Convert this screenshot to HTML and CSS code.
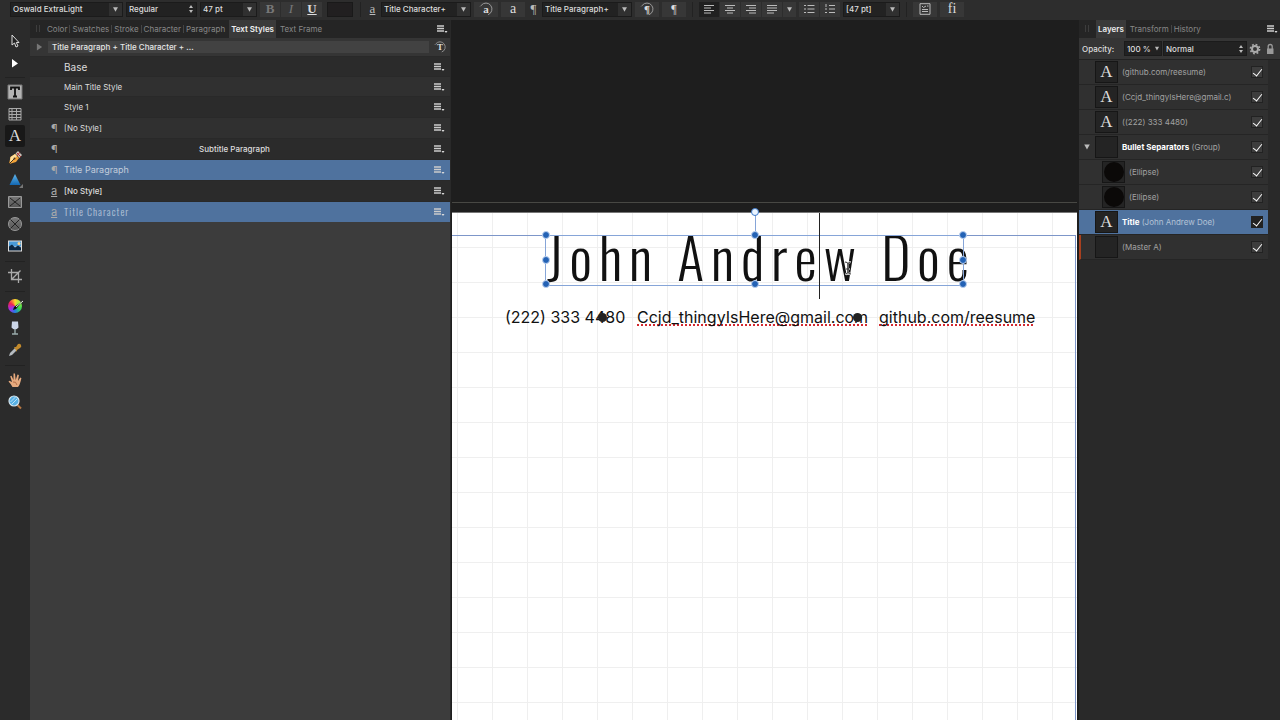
FILE: index.html
```html
<!DOCTYPE html>
<html lang="en">
<head>
<meta charset="utf-8">
<title>Resume layout</title>
<link rel="stylesheet" href="styles.css">
</head>
<body>
<svg class="defs" aria-hidden="true">
  <defs>
    <symbol id="menu" viewBox="0 0 12 10"><path d="M1 2h7M1 4.500h7M1 7h7" stroke="#ccc" stroke-width="1.600"/><path d="M8.500 7h3l-1.500 2z" fill="#ddd"/></symbol>
    <symbol id="arrow" viewBox="0 0 8 8"><path d="M1.200 1.500h5.600L4 6.500z" fill="#bbb"/></symbol>
    <symbol id="updown" viewBox="0 0 8 10"><path d="M2 4l2-3 2 3zM2 6l2 3 2-3z" fill="#bbb"/></symbol>
    <symbol id="ring" viewBox="0 0 16 14"><path d="M3.200 3.400A6 6 0 1 1 10 12.700M2.200 4.400l1-1" fill="none" stroke="#999" stroke-width="1"/></symbol>
    <linearGradient id="metal" x2="0" y2="1"><stop stop-color="#777"/><stop offset="1" stop-color="#555"/></linearGradient>
    <linearGradient id="blue" x2="0" y2="1"><stop stop-color="#62b8ee"/><stop offset="1" stop-color="#1267b2"/></linearGradient>
  </defs>
</svg>
<div class="app">
  <header class="toolbar">
    <div class="combo w-font"><select aria-label="Font family"><option>Oswald ExtraLight</option></select><svg class="arrow boxed"><use href="#arrow"/></svg></div>
    <div class="combo w-weight"><select aria-label="Font style"><option>Regular</option></select><svg class="updown"><use href="#updown"/></svg></div>
    <div class="combo w-size"><select aria-label="Font size"><option>47 pt</option></select><svg class="arrow boxed"><use href="#arrow"/></svg></div>
    <div class="group biu"><button class="serif dim bold">B</button><button class="serif dim italic">I</button><button class="serif under bold">U</button></div>
    <button class="swatch" aria-label="Text colour"></button>
    <span class="divider"></span>
    <span class="lead serif under">a</span>
    <div class="combo w-style"><select aria-label="Character style"><option>Title Character+</option></select><svg class="arrow boxed"><use href="#arrow"/></svg></div>
    <button class="square ringed serif"><svg><use href="#ring"/></svg>a</button>
    <button class="square serif big">a</button>
    <span class="lead serif">¶</span>
    <div class="combo w-style"><select aria-label="Paragraph style"><option>Title Paragraph+</option></select><svg class="arrow boxed"><use href="#arrow"/></svg></div>
    <button class="square ringed serif"><svg><use href="#ring"/></svg>¶</button>
    <button class="square serif">¶</button>
    <span class="divider"></span>
    <div class="group">
      <button class="on" aria-label="Align left"><svg viewBox="0 0 12 10"><path d="M1 1.500h10M1 4h7M1 6.500h10M1 9h7"/></svg></button>
      <button aria-label="Align centre"><svg viewBox="0 0 12 10"><path d="M1 1.500h10M3 4h6M1 6.500h10M3 9h6"/></svg></button>
      <button aria-label="Align right"><svg viewBox="0 0 12 10"><path d="M1 1.500h10M4 4h7M1 6.500h10M4 9h7"/></svg></button>
      <button aria-label="Justify"><svg viewBox="0 0 12 10"><path d="M1 1.500h10M1 4h10M1 6.500h10M1 9h7"/></svg></button>
      <button class="thin" aria-label="More alignment"><svg class="arrow"><use href="#arrow"/></svg></button>
    </div>
    <div class="group">
      <button aria-label="Bullets"><svg viewBox="0 0 12 10"><path d="M1 1.500h2M4.500 1.500h7M1 5h2M4.500 5h7M1 8.500h2M4.500 8.500h7"/></svg></button>
      <button aria-label="Numbering"><svg viewBox="0 0 12 10"><path d="M2 0v3M5 1.500h6M1 5h2M5 5h6M1 8.500h2M5 8.500h6"/></svg></button>
    </div>
    <div class="combo w-lead"><select aria-label="Leading"><option>[47 pt]</option></select><svg class="arrow boxed"><use href="#arrow"/></svg></div>
    <span class="divider"></span>
    <button class="square" aria-label="Text frame"><svg viewBox="0 0 12 12"><path d="M1 .7h10v10.600H1zM3 3l1.500 1.500L7 3M8 3h1.500M3 6.500h6M3 8.500h6" fill="none"/></svg></button>
    <button class="square serif big">fi</button>
  </header>

  <nav class="tools" aria-label="Tools">
    <button aria-label="Move"><svg viewBox="0 0 16 16"><path d="M5 2v10l2.500-2 1.500 4 2-1-1.700-3.500H12z" fill="#222" stroke="#ddd"/></svg></button>
    <button aria-label="Node"><svg viewBox="0 0 16 16"><path d="M5 4v8.500l6-4z" fill="#fff"/></svg></button>
    <hr>
    <button aria-label="Frame text"><svg viewBox="0 0 16 16"><path d="M1 1h14v14H1z" fill="#b4b4b4" stroke="#777"/><path d="M4 6V3.500h8V6M8 3.500v9M6 12.500h4" fill="none" stroke="#111" stroke-width="1.800"/></svg></button>
    <button aria-label="Table"><svg viewBox="0 0 16 16"><path d="M2 2.500h12v11.500H2zM2 5.500h12M2 8.500h12M2 11.500h12M5 2v12M9.500 2v12" fill="#333" stroke="#aaa"/></svg></button>
    <button class="active" aria-label="Artistic text"><span class="serif">A</span></button>
    <button aria-label="Pen"><svg viewBox="0 0 16 16"><path d="M2 14l1.500-7L8 4l4 4-3 4z" fill="#f1a33a"/><path d="M3.500 7L8 4l2 2-7 7z" fill="#ffe09a"/><path d="M2 14l5-5" stroke="#432"/><circle cx="7.500" cy="8.500" r="1" fill="#432"/><path d="M8.500 3.500L11 1l4 4-2.500 3z" fill="#c8c0b8"/><path d="M10 3l4 4M13 2l-3 4" stroke="#a33"/></svg></button>
    <button aria-label="Triangle"><svg viewBox="0 0 16 16"><path d="M8 2l5.500 11h-11z" fill="url(#blue)"/><path d="M16 12v4h-4z" fill="#777"/></svg></button>
    <button aria-label="Picture rectangle"><svg viewBox="0 0 16 16"><path d="M1.500 2.500h13v11h-13z" fill="url(#metal)" stroke="#999"/><path d="M3 4l10 8M13 4L3 12" stroke="#222"/></svg></button>
    <button aria-label="Picture ellipse"><svg viewBox="0 0 16 16"><circle cx="8" cy="8" r="6.500" fill="url(#metal)" stroke="#999"/><path d="M3.500 3.500l9 9M12.500 3.500l-9 9" stroke="#222"/></svg></button>
    <button aria-label="Place image"><svg viewBox="0 0 16 16"><path d="M1 2.500h14v11H1z" fill="#ddd"/><path d="M2 3.500h12v5H2z" fill="#4a9bd8"/><path d="M2 8.500l3-2 3 3 3-2 3 2v3H2z" fill="#0d2741"/><circle cx="12" cy="5.500" r="1.500" fill="#ffd38a"/></svg></button>
    <hr>
    <button aria-label="Crop"><svg viewBox="0 0 16 16"><path d="M4.500 1v10.500H15M1 4.500h10.500V15M5 11l8.500-8.500" fill="none" stroke="#aaa" stroke-width="1.300"/></svg></button>
    <hr>
    <button aria-label="Fill"><span class="wheel"><svg viewBox="0 0 16 16"><path d="M5 11l1-3 9-6-7 8z" fill="#111"/><path d="M8 8l7-6" stroke="#eee"/></svg></span></button>
    <button aria-label="Transparency"><svg viewBox="0 0 16 16"><path d="M5 1.500h6l.5 6Q10 9.500 8 9.500T4.500 7.500z" fill="#cbd5e8"/><path d="M8 9v5M5 14h6" stroke="#9aa" stroke-width="1.400"/></svg></button>
    <button aria-label="Colour picker"><svg viewBox="0 0 16 16"><path d="M2 14l1-3 5-5 2 2-5 5z" fill="#b5bbc0"/><path d="M7 5l2 0 2-3q2-1 3 1t-1 3l-3 2v2z" fill="#c28a2c"/></svg></button>
    <hr>
    <button aria-label="View"><svg viewBox="0 0 16 16"><path d="M5.500 15Q4 12 1.500 9.500L2.500 8.700 5 10 3.200 4.200 4.500 3.700 6.500 8 6.500 1.500H8L8.700 8 10.500 2.500 11.900 3 11 9 13.300 5.500 14.400 6.300Q13 13 11 15z" fill="#e7aa7e"/><path d="M6 10q3-1 4 3" stroke="#b56d45" fill="none"/></svg></button>
    <button aria-label="Zoom"><svg viewBox="0 0 16 16"><path d="M10.500 11l3.500 3.500" stroke="#b77742" stroke-width="2"/><circle cx="7" cy="7" r="5" fill="#58b0e4" stroke="#d6e6ee" stroke-width="1.200"/><path d="M3.500 8l5-5M5 10l5-5" stroke="#b9e3f8"/></svg></button>
  </nav>

  <aside class="styles">
    <div class="tabs"><span class="grip"></span><button>Color</button><i></i><button>Swatches</button><i></i><button>Stroke</button><i></i><button>Character</button><i></i><button>Paragraph</button><button class="current">Text Styles</button><button>Text Frame</button><button class="menu" aria-label="Panel menu"><svg><use href="#menu"/></svg></button></div>
    <div class="summary"><svg class="disclose" viewBox="0 0 8 8"><path d="M1 0l6 4-6 4z" fill="#777"/></svg><span class="formatting">Title Paragraph + Title Character + ...</span><button class="ringed serif" aria-label="Update style"><svg><use href="#ring"/></svg>T</button></div>
    <ul class="style-list">
      <li class="plain base"><span></span><b>Base</b><button aria-label="Style menu"><svg><use href="#menu"/></svg></button></li>
      <li class="plain"><span></span><b>Main Title Style</b><button aria-label="Style menu"><svg><use href="#menu"/></svg></button></li>
      <li class="plain"><span></span><b>Style 1</b><button aria-label="Style menu"><svg><use href="#menu"/></svg></button></li>
      <li><span>¶</span><b>[No Style]</b><button aria-label="Style menu"><svg><use href="#menu"/></svg></button></li>
      <li class="centered"><span>¶</span><b>Subtitle Paragraph</b><button aria-label="Style menu"><svg><use href="#menu"/></svg></button></li>
      <li class="selected preview"><span>¶</span><b>Title Paragraph</b><button aria-label="Style menu"><svg><use href="#menu"/></svg></button></li>
      <li><span class="under">a</span><b class="medium">[No Style]</b><button aria-label="Style menu"><svg><use href="#menu"/></svg></button></li>
      <li class="selected narrow"><span class="under">a</span><b>Title Character</b><button aria-label="Style menu"><svg><use href="#menu"/></svg></button></li>
    </ul>
  </aside>

  <main class="canvas">
    <div class="guide"></div>
    <div class="page">
      <div class="margin"></div>
      <h1 class="title">John Andrew Doe</h1>
      <span class="contact phone">(222) 333 4480</span>
      <span class="contact mail spell">Ccjd_thingyIsHere@gmail.com</span>
      <span class="contact site spell">github.com/reesume</span>
      <span class="bullet first"></span><span class="bullet second"></span>
      <div class="selection">
        <i class="stem"></i><i class="h open"></i><i class="h tl"></i><i class="h tc"></i><i class="h tr"></i><i class="h ml"></i><i class="h mr"></i><i class="h bl"></i><i class="h bc"></i><i class="h br"></i>
      </div>
      <div class="caret"></div>
      <svg class="ibeam" viewBox="0 0 8 14"><path d="M1 1q3 0 3 2v8q0 2-3 2M7 1Q4 1 4 3v8q0 2 3 2M2 8h4" fill="none" stroke="#fff" stroke-width="2"/><path d="M1 1q3 0 3 2v8q0 2-3 2M7 1Q4 1 4 3v8q0 2 3 2M2 8h4" fill="none" stroke="#333"/></svg>
    </div>
  </main>

  <aside class="layers">
    <div class="tabs"><span class="grip"></span><button class="current">Layers</button><button>Transform</button><i></i><button>History</button><button class="menu" aria-label="Panel menu"><svg><use href="#menu"/></svg></button></div>
    <div class="blend">
      <label for="opacity">Opacity:</label>
      <div class="combo w-opacity"><select id="opacity"><option>100 %</option></select><svg class="arrow"><use href="#arrow"/></svg></div>
      <div class="combo w-blend"><select aria-label="Blend mode"><option>Normal</option></select><svg class="updown"><use href="#updown"/></svg></div>
      <button aria-label="Layer options"><svg viewBox="0 0 12 12"><circle cx="6" cy="6" r="3" fill="none" stroke="#aaa" stroke-width="2"/><circle cx="6" cy="6" r="4.600" fill="none" stroke="#aaa" stroke-width="1.600" stroke-dasharray="1.800 1.813"/></svg></button>
      <button aria-label="Lock"><svg viewBox="0 0 12 12"><path d="M3 5.500h6.500V11H3z" fill="#999"/><path d="M4.200 6V3.500q0-2 2-2t2 2V6" fill="none" stroke="#999" stroke-width="1.300"/></svg></button>
    </div>
    <ul class="layer-list">
      <li><span class="tw"></span><span class="thumb">A</span><label for="l1">(github.com/reesume)</label><input id="l1" type="checkbox" checked></li>
      <li><span class="tw"></span><span class="thumb">A</span><label for="l2">(Ccjd_thingyIsHere@gmail.c)</label><input id="l2" type="checkbox" checked></li>
      <li><span class="tw"></span><span class="thumb">A</span><label for="l3">((222) 333 4480)</label><input id="l3" type="checkbox" checked></li>
      <li><span class="tw"><svg><use href="#arrow"/></svg></span><span class="thumb"></span><label for="l4"><b>Bullet Separators</b> (Group)</label><input id="l4" type="checkbox" checked></li>
      <li class="child"><span class="tw"></span><span class="thumb"><i></i></span><label for="l5">(Ellipse)</label><input id="l5" type="checkbox" checked></li>
      <li class="child"><span class="tw"></span><span class="thumb"><i></i></span><label for="l6">(Ellipse)</label><input id="l6" type="checkbox" checked></li>
      <li class="selected"><span class="tw"></span><span class="thumb">A</span><label for="l7"><b>Title</b> (John Andrew Doe)</label><input id="l7" type="checkbox" checked></li>
      <li class="master"><span class="tw"></span><span class="thumb"></span><label for="l8">(Master A)</label><input id="l8" type="checkbox" checked></li>
    </ul>
  </aside>
</div>
</body>
</html>
```

FILE: styles.css
```css
* { box-sizing: border-box; }
body { margin: 0; background: #1e1e1e; color: #ddd; font: 8px/12px Inter, "Liberation Sans", sans-serif; }
button, select, input { font: inherit; color: inherit; margin: 0; padding: 0; border: 0; background: none; }
button { display: flex; align-items: center; justify-content: center; }
ul { list-style: none; margin: 0; padding: 0; }
.defs { position: absolute; width: 0; height: 0; }
.serif { font-family: "Liberation Serif", serif; }

.app { display: grid; height: 100vh; overflow: hidden; grid-template: 20px minmax(0, 1fr) / 30px 421px minmax(0, 1fr) 201px; }

/* Context toolbar */
.toolbar { grid-column: 1 / -1; display: flex; align-items: center; gap: 3px; padding: 0 0 2px 10px; background: #2d2d2d; }
.combo { display: flex; align-items: center; height: 15px; background: #222; border: 1px solid #1b1b1b; color: #ddd; font-weight: 500; }
.combo select { appearance: none; flex: 1; min-width: 0; padding-left: 2px; }
.arrow { flex: none; width: 7px; height: 7px; margin: 0 3px; }
.boxed { width: 13px; height: 13px; padding: 3px; margin: 0; background: #303030; }
.updown { flex: none; width: 8px; height: 10px; margin-right: 1px; }
.w-font { width: 113px; }
.w-weight { width: 71px; }
.w-size { width: 57px; }
.w-style { width: 90px; }
.w-lead { width: 57px; }
.group { display: flex; gap: 1px; }
.toolbar button { width: 20px; height: 15px; background: #373737; color: #ddd; }
.toolbar button svg { width: 12px; height: 12px; stroke: #bbb; stroke-width: 1; }
.toolbar .thin { width: 13px; }
.toolbar .thin svg { width: 7px; height: 7px; stroke: none; }
.toolbar .square { width: 24px; font-size: 12px; }
.toolbar .big { font-size: 14px; }
.toolbar .on { background: #202020; }
.toolbar .swatch { width: 26px; background: #211f20; margin: 0 1px 0 2px; border: 1px solid #191919; }
.biu button { font-size: 13px; }
.toolbar .dim { color: #777; }
.bold { font-weight: bold; }
.italic { font-style: italic; }
.under { text-decoration: underline; }
.divider { width: 1px; height: 15px; background: #222; margin: 0 3px; }
.lead { width: 11px; font-size: 13px; color: #bbb; text-align: center; }
.ringed { position: relative; }
.ringed svg { position: absolute; inset: 0; margin: auto; }
.toolbar .ringed { font-size: 11px; font-weight: bold; }
.toolbar .ringed svg { width: 16px; height: 14px; stroke: none; }

/* Tool strip */
.tools { background: #2b2b2b; padding-top: 10px; }
.tools button { width: 20px; height: 22px; margin-left: 5px; }
.tools svg { width: 16px; height: 16px; display: block; }
.tools .active { background: #181818; font-size: 17px; border-radius: 2px; }
.tools hr { height: 1px; margin: 4px 5px 3px; border: 0; background: #222; }
.tools hr:first-of-type { margin-top: 3px; }
.wheel { width: 14px; height: 14px; border-radius: 50%; background: conic-gradient(#ffd52e, #8ff046, #36d653, #237ce8, #a52be8, #ef234f, #ffd52e); }

/* Panel tabs */
.tabs { display: flex; height: 18px; padding-left: 5px; background: #252525; color: #888; }
.tabs button { padding: 0 2px; white-space: nowrap; }
.tabs i { width: 1px; height: 8px; margin: 5px 0; background: #444; }
.tabs .current { background: #3a3a3a; color: #eee; font-weight: 600; padding: 0 2px; margin: 0 2px; }
.tabs .menu { margin-left: auto; padding: 0 2px; }
.grip { width: 4px; height: 7px; margin: 5px 5px 0 1px; border: solid #3d3d3d; border-width: 0 1px; }
.menu svg, .style-list svg { width: 12px; height: 10px; }

/* Text styles */
.styles { background: #3c3c3c; border-right: 1px solid #292929; }
.summary { display: flex; align-items: center; height: 18px; padding: 0 3px 0 6px; background: #353535; }
.disclose { width: 7px; height: 8px; }
.formatting { flex: 1; height: 12px; margin: 0 4px 0 5px; padding-left: 4px; background: #424242; color: #e5e5e5; font-weight: 500; }
.summary .ringed { width: 14px; height: 14px; font-size: 9px; font-weight: bold; }
.summary .ringed svg { width: 14px; height: 14px; }
.style-list li { display: flex; align-items: center; height: 21px; padding: 0 5px 0 19px; background: #2b2b2b; border-top: 1px solid #292929; }
.style-list li:nth-child(even) { background: #303030; }
.style-list .plain { height: 20px; }
.style-list .plain:nth-child(3) { height: 21px; }
.style-list span { width: 15px; color: #aaa; font-size: 11px; padding-left: 2px; }
.style-list b { flex: 1; font-weight: 400; }
.style-list .base b { font-size: 10px; }
.style-list .medium { font-weight: 500; }
.style-list .centered b { text-align: center; font-weight: 500; padding-right: 28px; }
.style-list .selected, .style-list .selected:nth-child(even) { background: #4f729e; color: #c2cddb; }
.style-list .preview b { font-size: 9px; }

/* The title style is a light condensed face with wide tracking */
.style-list .narrow b { font: 300 10px/12px Oswald, "Roboto Condensed", "Liberation Sans Narrow", sans-serif; letter-spacing: 1px; color: #b4c4d8; }

/* Canvas */
.canvas { position: relative; overflow: hidden; margin: 0 2px 0 1px; background: #1e1e1e; }
.guide { position: absolute; top: 182px; left: 0; right: 0; height: 1px; background: #484844; }
.page { position: absolute; inset: 192px 0 0; border-top: 1px solid #777; background: linear-gradient(90deg, #efefef 1px, transparent 1px) 5px 0 / 35px 35px, linear-gradient(#efefef 1px, transparent 1px) 0 34px / 35px 35px, #fff; color: #111; }
.margin { position: absolute; inset: 22px 1px 0 0; border: solid #7d96c9; border-width: 1px 1px 0 0; }
.title { position: absolute; left: 95px; top: 5px; margin: 0; font: 300 56px/76px Oswald, "Roboto Condensed", "Liberation Sans Narrow", sans-serif; letter-spacing: 7px; white-space: nowrap; }
.contact { position: absolute; top: 94px; font: 16px/20px Inter, "Liberation Sans", sans-serif; white-space: nowrap; }
.phone { left: 53px; }
.mail { left: 185px; }
.site { left: 427px; }
.spell { text-decoration: underline dotted #d3282f 2px; text-underline-offset: 1px; text-decoration-skip-ink: none; }
.bullet { position: absolute; top: 100px; width: 9px; height: 9px; border-radius: 50%; background: #222; }
.bullet.first { left: 146px; }
.bullet.second { left: 401px; }
.selection { position: absolute; left: 93px; top: 22px; width: 419px; height: 51px; border: 1px solid #86a5d8; }
.h { position: absolute; width: 8px; height: 8px; margin: -5px -4px; border: 1px solid #bcd1f0; border-radius: 50%; background: #2362b5; }
.tl, .tc, .tr { top: 0; }
.ml, .mr { top: 50%; }
.bl, .bc, .br { top: 100%; }
.tl, .ml, .bl { left: 0; }
.tc, .bc, .open { left: 50%; }
.tr, .mr, .br { left: 100%; }
.open { top: -23px; background: #eaf4ff; border-color: #3c7acb; }
.stem { position: absolute; left: 50%; top: -22px; width: 1px; height: 22px; background: #86a5d8; }
.caret { position: absolute; left: 367px; top: 0; width: 1px; height: 86px; background: #222; }
.ibeam { position: absolute; left: 392px; top: 48px; width: 8px; height: 14px; }

/* Layers */
.layers { background: #292929; }
.blend { display: flex; align-items: center; height: 22px; padding: 0 3px; background: #353535; border-bottom: 1px solid #222; font-weight: 500; }
.blend label { width: 42px; }
.blend button { width: 15px; }
.blend button svg { width: 12px; height: 12px; }
.blend .w-opacity { width: 38px; }
.blend .w-opacity .arrow { margin: 0 1px; width: 6px; }
.w-blend { flex: 1; margin-left: 1px; }
.layer-list { margin-right: 12px; }
.layer-list li { display: flex; align-items: center; height: 25px; padding-right: 5px; background: #303030; border-bottom: 1px solid #252525; color: #a2a2a2; }
.layer-list label { flex: 1; white-space: nowrap; }
.layer-list b { color: #fff; font-weight: 700; }
.tw { width: 16px; padding-left: 4px; }
.tw svg { width: 8px; height: 8px; display: block; }
.thumb { display: grid; place-items: center; width: 23px; height: 22px; margin-right: 4px; border: 1px solid #161616; background: #242424; color: #ddd; font: 17px/20px "Liberation Serif", serif; }
.thumb i { width: 20px; height: 20px; border-radius: 50%; background: #0b0908; }
.child .tw { width: 23px; }
.layer-list .selected { background: #4f729e; color: #b3c2d6; }
.layer-list .master { border-left: 2px solid #a8401f; }
.master .tw { width: 14px; }
.layer-list input { appearance: none; display: grid; place-items: center; width: 12px; height: 12px; background: #3d3d3d; border: 1px solid #222; }
.layer-list input:checked::before { content: ""; width: 4px; height: 8px; border: solid #fff; border-width: 0 1px 1px 0; rotate: 38deg; margin-top: -2px; }
.layer-list .selected input { background: #222; }
```
